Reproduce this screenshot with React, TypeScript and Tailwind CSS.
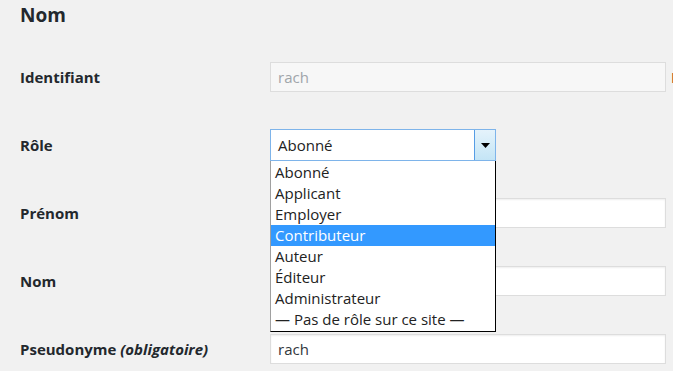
import React from 'react';

const roles = [
  'Abonné',
  'Applicant',
  'Employer',
  'Contributeur',
  'Auteur',
  'Éditeur',
  'Administrateur',
  '— Pas de rôle sur ce site —',
];

const Row: React.FC<{ label: React.ReactNode; children: React.ReactNode }> = ({ label, children }) => (
  <div className="flex h-[68px] items-center">
    <div className="w-[270px] shrink-0 pl-5 text-[15px] font-bold text-[#23282d]">{label}</div>
    <div className="relative min-w-0 flex-1">{children}</div>
  </div>
);

const TextInput: React.FC<{ value?: string; disabled?: boolean }> = ({ value = '', disabled }) => (
  <div
    className={
      disabled
        ? 'h-[30px] w-[396px] shrink-0 border border-[#dddddd] bg-[#f7f7f7] px-[7px] text-[15px] leading-[28px] text-[#a0a5aa]'
        : 'h-[30px] w-[396px] shrink-0 border border-[#dddddd] bg-white px-[7px] text-[15px] leading-[28px] text-[#32373c] shadow-[inset_0_1px_2px_rgba(0,0,0,0.07)]'
    }
  >
    {value}
  </div>
);

export default function App() {
  return (
    <div
      className="h-[371px] w-[673px] overflow-hidden bg-[#f1f1f1]"
      style={{ fontFamily: '"Open Sans", "Noto Sans", sans-serif' }}
    >
      <h2 className="pl-5 pt-[3px] text-[19px] font-bold leading-[24px] text-[#23282d]">Nom</h2>
      <div className="pt-[16px]">
        <Row label="Identifiant">
          <div className="flex items-center">
            <TextInput value="rach" disabled />
            <span className="ml-[5px] shrink-0 whitespace-nowrap text-[15px] font-bold text-[#b0502a]">Les</span>
          </div>
        </Row>
        <Row label="Rôle">
          <div className="flex h-[32px] w-[226px] border border-[#7eb4ea] bg-white">
            <div className="flex-1 pl-[7px] text-[15px] leading-[30px] text-[#222]">Abonné</div>
            <div className="flex w-[21px] items-center justify-center border-l border-[#569de5] bg-gradient-to-b from-[#e5f3fb] to-[#c4e5f6]">
              <svg width="9" height="5" viewBox="0 0 9 5">
                <path d="M0 0h9L4.5 5z" fill="#000" />
              </svg>
            </div>
          </div>
          <div className="absolute left-0 top-[32px] z-10 w-[226px] border-b border-r border-l border-b-black border-r-black border-l-[#a0a0a0] bg-white pb-[1px] pt-[1px]">
            {roles.map(r => (
              <div
                key={r}
                className={
                  r === 'Contributeur'
                    ? 'h-[21px] bg-[#3399ff] pl-[4px] text-[15px] leading-[21px] text-white'
                    : 'h-[21px] pl-[4px] text-[15px] leading-[21px] text-[#222]'
                }
              >
                {r}
              </div>
            ))}
          </div>
        </Row>
        <Row label="Prénom">
          <TextInput />
        </Row>
        <Row label="Nom">
          <TextInput />
        </Row>
        <Row
          label={
            <>
              Pseudonyme <span className="italic">(obligatoire)</span>
            </>
          }
        >
          <TextInput value="rach" />
        </Row>
      </div>
    </div>
  );
}
